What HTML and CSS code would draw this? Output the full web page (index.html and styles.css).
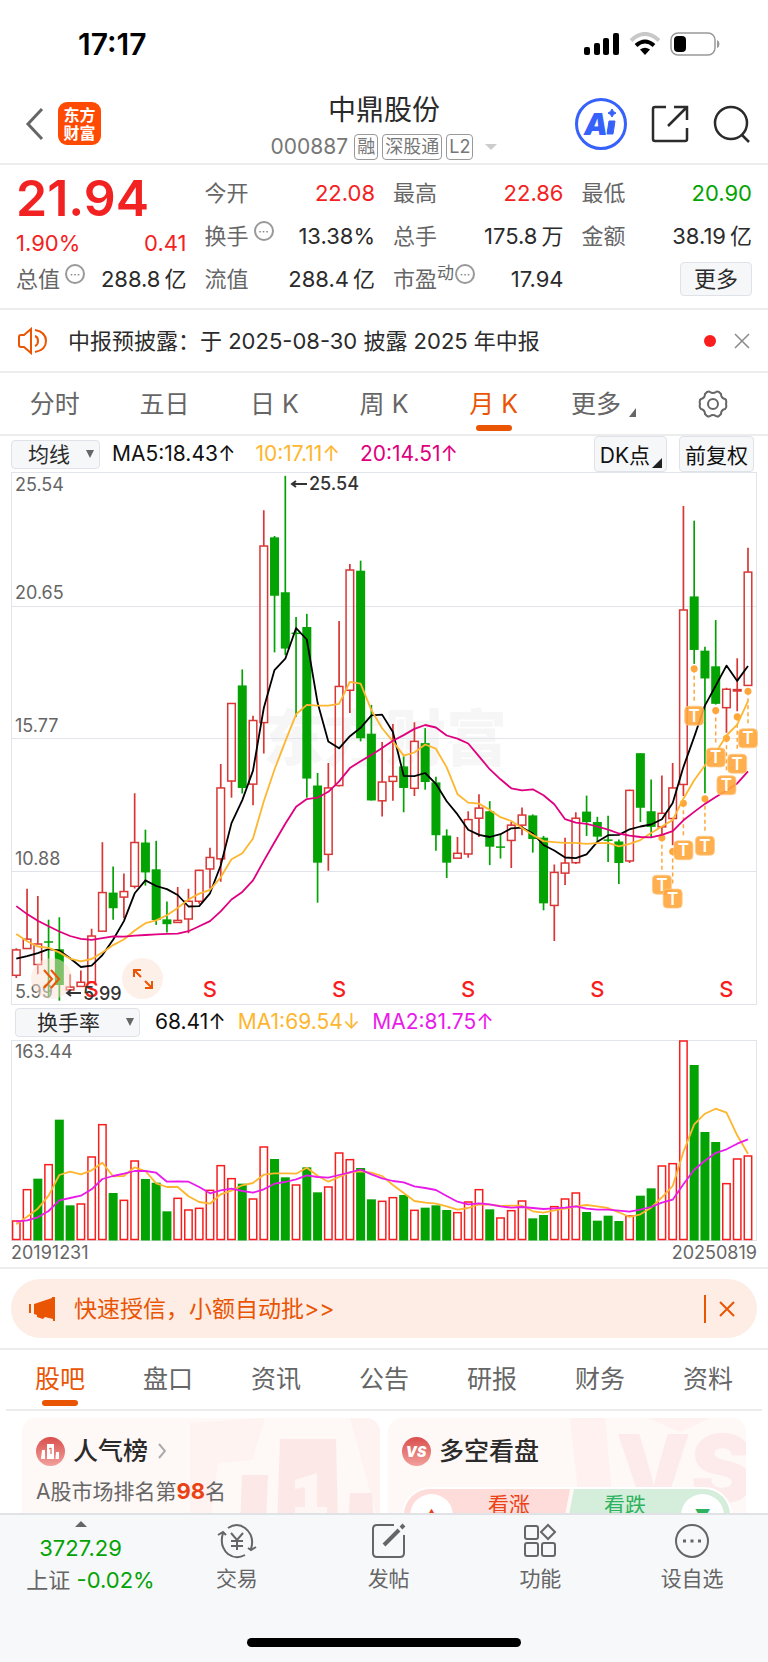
FILE: index.html
```html
<!DOCTYPE html>
<html lang="zh-CN">
<head>
    <meta charset="UTF-8">
    <meta name="viewport" content="width=device-width, initial-scale=1.0">
    <title>中鼎股份 000887</title>
    <link rel="stylesheet" href="styles.css">
</head>
<body>
    <div class="status-bar">
        <span class="clock">17:17</span>
        <div class="status-icons">
            <svg width="36" height="24" viewBox="0 0 36 24">
                <rect x="0" y="15" width="6" height="8" rx="2"/>
                <rect x="10" y="11" width="6" height="12" rx="2"/>
                <rect x="19" y="6" width="6" height="17" rx="2"/>
                <rect x="29" y="1" width="6" height="22" rx="2"/>
            </svg>
            <svg width="30" height="24" viewBox="0 0 30 24">
                <path d="M1 8.5 Q15 -4.5 29 8.5" fill="none" stroke="#c8c8c8" stroke-width="4"/>
                <path d="M6 13.5 Q15 5.5 24 13.5" fill="none" stroke="#000" stroke-width="4"/>
                <path d="M10 17.5 Q15 14 20 17.5 L15 23 Z"/>
            </svg>
            <svg width="50" height="24" viewBox="0 0 50 24">
                <rect x="1" y="1" width="44" height="22" rx="7" fill="none" stroke="#999" stroke-width="1.5"/>
                <rect x="4" y="4" width="12" height="16" rx="4"/>
                <path d="M47 8 Q49.5 9 49.5 12 Q49.5 15 47 16 Z" fill="#999"/>
            </svg>
        </div>
    </div>

    <header class="header">
        <div class="header-left">
            <button class="icon-btn" type="button" aria-label="返回">
                <svg width="20" height="34" viewBox="0 0 20 34" fill="none" stroke="#666" stroke-width="3"><path d="M17 2 L3 17 L17 32"/></svg>
            </button>
            <a class="logo" href="#"><span>东方</span><span>财富</span></a>
        </div>
        <div class="header-title">
            <h1>中鼎股份</h1>
            <div class="code">
                <span class="code-number">000887</span>
                <span class="tag">融</span>
                <span class="tag">深股通</span>
                <span class="tag">L2</span>
                <i class="tri-down"></i>
            </div>
        </div>
        <div class="header-right">
            <button class="icon-btn" type="button" aria-label="AI">
                <svg width="52" height="52" viewBox="0 0 52 52">
                    <circle cx="26" cy="26" r="24.5" fill="none" stroke="#3662fb" stroke-width="3"/>
                    <text class="ai-text" x="9" y="37">A</text>
                    <path d="M34 23 h6 l-2 13 h-6 Z M37 11 Q38 14 41 15 Q38 16 37 19 Q36 16 33 15 Q36 14 37 11 Z" fill="#3662fb" stroke="#3662fb"/>
                </svg>
            </button>
            <button class="icon-btn" type="button" aria-label="分享">
                <svg width="38" height="38" viewBox="0 0 38 38" fill="none" stroke="#2b2b2b" stroke-width="2.5"><path d="M15 2 H4 Q2 2 2 4 V34 Q2 36 4 36 H34 Q36 36 36 34 V23 M23 2 H36 V15 M36 2 L17 21"/></svg>
            </button>
            <button class="icon-btn" type="button" aria-label="搜索">
                <svg width="38" height="38" viewBox="0 0 38 38" fill="none" stroke="#2b2b2b" stroke-width="2.5"><circle cx="18" cy="18" r="16"/><path d="M29 30 L36 37"/></svg>
            </button>
        </div>
    </header>

    <section class="quote">
        <div class="quote-price">
            <strong class="price">21.94</strong>
            <div class="pair red"><span>1.90%</span><span>0.41</span></div>
        </div>
        <div class="pair"><span class="name">今开</span><span class="red">22.08</span></div>
        <div class="pair"><span class="name">最高</span><span class="red">22.86</span></div>
        <div class="pair"><span class="name">最低</span><span class="green">20.90</span></div>
        <div class="pair"><span class="name">换手<sup class="dots">···</sup></span><span>13.38%</span></div>
        <div class="pair"><span class="name">总手</span><span>175.8<span class="unit">万</span></span></div>
        <div class="pair"><span class="name">金额</span><span>38.19<span class="unit">亿</span></span></div>
        <div class="pair"><span class="name">总值<sup class="dots">···</sup></span><span>288.8<span class="unit">亿</span></span></div>
        <div class="pair"><span class="name">流值</span><span>288.4<span class="unit">亿</span></span></div>
        <div class="pair"><span class="name">市盈<sup class="dyn">动</sup><sup class="dots">···</sup></span><span>17.94</span></div>
        <div class="pair pair-end"><button class="more-btn" type="button">更多</button></div>
    </section>

    <section class="notice">
        <svg width="32" height="28" viewBox="0 0 32 28" fill="none" stroke="#ea5504" stroke-width="2"><path d="M14 2 L7 8 H4 Q2 8 2 10 V18 Q2 20 4 20 H7 L14 26 Z M18 9 Q21 10 21 14 Q21 18 18 19 M18 3 Q29 5 29 14 Q29 23 18 25"/></svg>
        <a class="notice-text" href="#">中报预披露：于 2025-08-30 披露 2025 年中报</a>
        <i class="red-dot"></i>
        <button class="icon-btn" type="button" aria-label="关闭公告">
            <svg width="16" height="16" viewBox="0 0 16 16" stroke="#8a8a8a" stroke-width="1.5"><path d="M1 1 L15 15 M15 1 L1 15"/></svg>
        </button>
    </section>

    <nav class="tabs period-tabs">
        <a href="#">分时</a>
        <a href="#">五日</a>
        <a href="#">日 K</a>
        <a href="#">周 K</a>
        <a class="active" href="#">月 K</a>
        <a class="tab-more" href="#">更多<i class="corner"></i></a>
        <a href="#" aria-label="设置">
            <svg width="30" height="28" viewBox="0 0 30 28" fill="none" stroke="#666" stroke-width="2"><path d="M9 2 Q11 1 12 2 Q15 4 18 2 Q19 1 21 2 L23 4 Q23 8 27 9 Q29 10 28 14 Q29 18 27 19 Q23 20 23 24 L21 26 Q19 27 18 26 Q15 24 12 26 Q11 27 9 26 L7 24 Q7 20 3 19 Q1 18 2 14 Q1 10 3 9 Q7 8 7 4 Z"/><circle cx="15" cy="14" r="5"/></svg>
        </a>
    </nav>

    <section class="chart-section">
        <div class="indicator-bar main-bar">
            <select class="picker" aria-label="主图指标"><option>均线</option></select>
            <span>MA5:18.43↑</span>
            <span class="amber">10:17.11↑</span>
            <span class="magenta">20:14.51↑</span>
            <button class="chart-btn dk-btn" type="button">DK点<i class="corner"></i></button>
            <button class="chart-btn" type="button">前复权</button>
        </div>
        <div class="chart-box">
            <svg id="kline" class="chart" viewBox="0 0 746 532"></svg>
            <button class="float-btn float-next" type="button" aria-label="展开">
                <svg width="20" height="20" viewBox="0 0 20 20" fill="none" stroke="#ea5504" stroke-width="2"><path d="M2 1 L10 10 L2 19 M9 1 L17 10 L9 19"/></svg>
            </button>
            <button class="float-btn float-full" type="button" aria-label="全屏">
                <svg width="22" height="22" viewBox="0 0 22 22" fill="none" stroke="#ea5504" stroke-width="2"><path d="M2 9 V2 H9 M2 2 L9 9 M20 13 V20 H13 M20 20 L13 13"/></svg>
            </button>
        </div>
        <div class="indicator-bar volume-bar">
            <select class="picker picker-wide" aria-label="副图指标"><option>换手率</option></select>
            <span>68.41↑</span>
            <span class="amber">MA1:69.54↓</span>
            <span class="violet">MA2:81.75↑</span>
        </div>
        <div class="chart-box">
            <svg id="volume" class="chart" viewBox="0 0 746 201"></svg>
        </div>
        <div class="dates"><span>20191231</span><span>20250819</span></div>
    </section>

    <section class="promo">
        <svg width="28" height="24" viewBox="0 0 28 24" fill="#ea5504"><path d="M1 7 h2 v9 h-2 Z M6 7 L24 1 V0 H27 V24 H25 V22 L17 20 L15 22 L9 20 V18 L6 17 Z"/></svg>
        <a class="promo-text" href="#">快速授信，小额自动批&gt;&gt;</a>
        <button class="icon-btn promo-close" type="button" aria-label="关闭广告">
            <svg width="16" height="16" viewBox="0 0 16 16" stroke="#ea5504" stroke-width="2"><path d="M1 1 L15 15 M15 1 L1 15"/></svg>
        </button>
    </section>

    <nav class="tabs info-tabs">
        <a class="active" href="#">股吧</a>
        <a href="#">盘口</a>
        <a href="#">资讯</a>
        <a href="#">公告</a>
        <a href="#">研报</a>
        <a href="#">财务</a>
        <a href="#">资料</a>
    </nav>

    <section class="cards">
        <article class="card">
            <svg class="card-art" width="190" height="110" viewBox="0 0 190 110">
                <path d="M0 5 L75 0 L62 42 L28 45 L20 110 H0 Z M160 0 H190 V110 Z" fill="#fef3f1"/>
                <path d="M52 57 H78 L76 110 H50 Z M90 21 H146 L148 110 H87 Z M160 75 H182 L184 110 H158 Z" fill="#fce9e7"/>
                <path d="M105 62 L127 55 V89 H137 V96 H105 V89 H115 V69 L105 71 Z" fill="#fef6f5"/>
            </svg>
            <h2>
                <svg width="29" height="29" viewBox="0 0 29 29">
                    <defs><linearGradient id="badge" x2="0" y2="1"><stop offset="0" stop-color="#d94f4d"/><stop offset="1" stop-color="#f2a09c"/></linearGradient></defs>
                    <circle cx="14.5" cy="14.5" r="14.5" fill="url(#badge)"/>
                    <path d="M6 13 H9 V22 H5 Z M11 7 H18 V22 H11 Z M20 15 H23 V22 H19.5 Z" fill="#fff"/>
                    <path d="M13 12 L15 11 V17" fill="none" stroke="#d94f4d"/>
                </svg>
                人气榜
                <svg class="arrow" width="8" height="16" viewBox="0 0 8 16" fill="none" stroke="#aaa" stroke-width="2"><path d="M1 1 L7 8 L1 15"/></svg>
            </h2>
            <p class="rank">A股市场排名第<b>98</b>名</p>
        </article>
        <article class="card">
            <svg class="card-art" width="176" height="110" viewBox="0 0 176 110">
                <path d="M0 0 H35 L45 110 H12 Z M78 0 H140 L110 14 Z" fill="#fef1ef"/>
                <text class="art-vs" x="46" y="84">VS</text>
            </svg>
            <h2>
                <svg width="29" height="29" viewBox="0 0 29 29">
                    <circle cx="14.5" cy="14.5" r="14.5" fill="url(#badge)"/>
                    <text class="badge-vs" x="14" y="20">VS</text>
                </svg>
                多空看盘
            </h2>
            <div class="vote">
                <button class="vote-up" type="button"><i class="vote-dot">▲</i><span>看涨</span></button>
                <button class="vote-down" type="button"><span>看跌</span><i class="vote-dot">▼</i></button>
            </div>
        </article>
    </section>

    <footer class="bottom-bar">
        <div class="bottom-items">
            <a class="index" href="#">
                <i class="tri-up"></i>
                <span class="green">3727.29</span>
                <span class="index-change">上证 <span class="green">-0.02%</span></span>
            </a>
            <a href="#">
                <svg width="40" height="36" viewBox="0 0 40 36" fill="none" stroke="#666" stroke-width="2"><path d="M11 5 Q20 -1 28 5 Q38 13 34 26 M31 25 L34 27 L39 24 M28 32 Q19 37 11 31 Q2 23 6 10 M1 12 L6 9 L9 12 M14 10 L20 17 L26 10 M20 17 V27 M14 18 H26 M14 23 H26"/></svg>
                <span>交易</span>
            </a>
            <a href="#">
                <svg width="36" height="36" viewBox="0 0 36 36" fill="none" stroke="#666" stroke-width="2"><path d="M23 2 H6 Q2 2 2 6 V30 Q2 34 6 34 H29 Q33 34 33 30 V12"/><path d="M13 22 L28 7 M30 5 L33 2" stroke-width="4"/></svg>
                <span>发帖</span>
            </a>
            <a href="#">
                <svg width="34" height="36" viewBox="0 0 34 36" fill="none" stroke="#666" stroke-width="2"><rect x="2" y="3" width="13" height="13" rx="2"/><rect x="2" y="20" width="13" height="13" rx="2"/><rect x="19" y="20" width="13" height="13" rx="2"/><path d="M25 2 L32 9 L25 16 L18 9 Z"/></svg>
                <span>功能</span>
            </a>
            <a href="#">
                <svg width="36" height="36" viewBox="0 0 36 36" fill="none" stroke="#666" stroke-width="2"><circle cx="18" cy="18" r="16"/><path d="M9 18 h3 M16.5 18 h3 M24 18 h3" stroke-width="3"/></svg>
                <span>设自选</span>
            </a>
        </div>
        <div class="home-indicator"></div>
    </footer>

    <script src="script.js"></script>
</body>
</html>
```
FILE: styles.css
```css
* {
    box-sizing: border-box;
}
body {
    margin: 0;
    font-family: Inter, "Noto Sans CJK SC", sans-serif;
    font-size: 22px;
    line-height: 30px;
    color: #2b2b2b;
    background: #fff;
}
a {
    color: inherit;
    text-decoration: none;
}
button, select {
    font-family: inherit;
    color: inherit;
}
svg {
    display: block;
    flex: none;
}
h1, h2, p {
    margin: 0;
}
.red {
    color: #f32222;
}
.green {
    color: #04a304;
}
.amber {
    color: #feb62f;
}
.magenta {
    color: #e0007f;
}
.violet {
    color: #e91bea;
}
.icon-btn {
    padding: 0;
    border: 0;
    background: none;
    cursor: pointer;
}

/* status bar */
.status-bar {
    display: flex;
    justify-content: space-between;
    align-items: center;
    height: 84px;
    padding: 4px 48px 0 78px;
}
.clock {
    font-size: 30px;
    font-weight: 600;
    color: #000;
}
.status-icons {
    display: flex;
    gap: 10px;
}

/* header */
.header {
    display: grid;
    grid-template-columns: 1fr auto 1fr;
    align-items: center;
    height: 81px;
    padding: 0 17px;
    border-bottom: 2px solid #ececec;
}
.header-left, .header-right {
    display: flex;
    align-items: center;
}
.header-left {
    gap: 13px;
    padding-left: 8px;
}
.header-right {
    justify-content: flex-end;
    gap: 24px;
}
.logo {
    display: flex;
    flex-direction: column;
    justify-content: center;
    width: 43px;
    height: 43px;
    border-radius: 9px;
    background: #ff4a04;
    color: #fff;
    font-size: 16px;
    line-height: 18px;
    font-weight: 700;
    text-align: center;
}
.header-title {
    padding-top: 6px;
    text-align: center;
}
.header-title h1 {
    font-size: 28px;
    line-height: 38px;
    font-weight: 400;
}
.code {
    display: flex;
    align-items: center;
    gap: 4px;
    margin-top: 3px;
    color: #777;
}
.code-number {
    font-size: 21px;
    margin-right: 2px;
}
.tag {
    padding: 0 2px;
    border: 1px solid #999;
    border-radius: 4px;
    font-size: 18px;
    line-height: 24px;
}
.tri-down {
    margin-left: 8px;
    border: 6px solid transparent;
    border-top-color: #ccc;
    border-bottom: 0;
}
.ai-text {
    font-size: 30px;
    font-weight: 900;
    font-style: italic;
    fill: #3662fb;
}

/* quote */
.quote {
    display: grid;
    grid-template-columns: repeat(4, 1fr);
    gap: 13px 18px;
    padding: 13px 16px 14px;
    border-bottom: 2px solid #ececec;
}
.quote-price {
    grid-row: span 2;
    margin-bottom: -7px;
}
.price {
    display: block;
    font-size: 50px;
    line-height: 40px;
    font-weight: 600;
    color: #f32222;
}
.quote-price .pair {
    margin-top: 10px;
}
.pair {
    display: flex;
    justify-content: space-between;
    align-items: center;
    white-space: nowrap;
}
.pair-end {
    justify-content: flex-end;
}
.unit {
    margin-left: 4px;
}
.name {
    display: flex;
    color: #666;
}
.name sup {
    line-height: 18px;
}
.dots {
    width: 20px;
    height: 20px;
    margin-left: 5px;
    border: 2px solid #999;
    border-radius: 50%;
    font-size: 12px;
    text-align: center;
    color: #777;
}
.dyn {
    font-size: 17px;
}
.dyn + .dots {
    margin-left: 1px;
}
.more-btn {
    height: 34px;
    margin: -2px 0;
    padding: 0 13px;
    border: 1px solid #dfe2e8;
    border-radius: 4px;
    background: #f6f7f9;
    font-size: 22px;
    line-height: 30px;
}

/* notice */
.notice {
    display: flex;
    align-items: center;
    height: 63px;
    padding: 0 18px 0 17px;
    border-bottom: 2px solid #ececec;
}
.notice-text {
    flex: 1;
    margin-left: 19px;
}
.red-dot {
    width: 12px;
    height: 12px;
    margin-right: 18px;
    border-radius: 50%;
    background: #f91d1d;
}

/* tabs */
.tabs {
    display: flex;
    height: 63px;
    border-bottom: 2px solid #ececec;
}
.tabs a {
    position: relative;
    display: flex;
    flex: 1;
    justify-content: center;
    align-items: center;
    font-size: 25px;
    color: #666;
}
.tabs .active {
    color: #ea5504;
}
.tabs .active::after {
    content: "";
    position: absolute;
    bottom: 3px;
    width: 36px;
    height: 6px;
    border-radius: 3px;
    background: #ea5504;
}
.corner {
    border-left: 7px solid transparent;
    border-bottom: 9px solid #666;
}
.tab-more .corner {
    align-self: flex-end;
    margin: 0 0 17px 8px;
}

/* charts */
.chart-section {
    padding: 0 11px 5px;
    border-bottom: 2px solid #ececec;
}
.indicator-bar {
    display: flex;
    align-items: center;
    gap: 12px;
    height: 36px;
    font-size: 21px;
    color: #111;
    white-space: nowrap;
}
.main-bar {
    padding-right: 3px;
}
.main-bar span {
    margin-right: 8px;
}
.picker {
    appearance: none;
    width: 89px;
    height: 29px;
    padding: 0 0 0 16px;
    border: 1px solid #dfe2e8;
    border-radius: 4px;
    background: url("data:image/svg+xml,%3Csvg xmlns='http://www.w3.org/2000/svg' width='8' height='8'%3E%3Cpath d='M0 0h8l-4 8z' fill='%23666'/%3E%3C/svg%3E") no-repeat right 5px center #f6f7f9;
    font-size: 21px;
    line-height: 27px;
    color: #2b2b2b;
}
.picker-wide {
    width: 125px;
    padding-left: 21px;
}
.volume-bar {
    padding-left: 4px;
}
.volume-bar .picker {
    margin-right: 3px;
}
.chart-btn {
    position: relative;
    height: 36px;
    padding: 0 5px;
    border: 1px solid #dfe2e8;
    border-radius: 4px;
    background: #f6f7f9;
    font-size: 21px;
}
.dk-btn {
    margin-left: auto;
    padding-right: 16px;
}
.dk-btn .corner {
    position: absolute;
    right: 4px;
    bottom: 3px;
    border-left-width: 10px;
    border-bottom: 10px solid #222;
}
.chart-box {
    position: relative;
}
.chart {
    width: 100%;
    overflow: visible;
}
.axis {
    font-size: 18px;
    fill: #666;
}
.peak {
    font-size: 18px;
    font-weight: 500;
    fill: #333;
}
.signal {
    font-size: 22px;
    font-weight: 500;
    fill: #f91d1d;
    text-anchor: middle;
}
.t-mark {
    font-size: 17px;
    font-weight: 600;
    fill: #fff;
    text-anchor: middle;
}
.watermark {
    font-size: 61px;
    font-weight: 900;
    fill: #f6f6f7;
}
.float-btn {
    position: absolute;
    bottom: 5px;
    display: flex;
    justify-content: center;
    align-items: center;
    width: 41px;
    height: 41px;
    padding: 0;
    border: 0;
    border-radius: 50%;
    background: rgba(252, 226, 212, 0.5);
}
.float-next {
    left: 20px;
}
.float-full {
    left: 111px;
}
.dates {
    display: flex;
    justify-content: space-between;
    padding-top: 3px;
    font-size: 18px;
    line-height: 18px;
    color: #666;
}

/* promo */
.promo {
    display: flex;
    align-items: center;
    height: 59px;
    margin: 10px 11px;
    padding: 0 22px 0 17px;
    border-radius: 30px;
    background: #fdede5;
    color: #ea5504;
}
.promo-text {
    flex: 1;
    margin-left: 18px;
    font-size: 23px;
}
.promo-close {
    padding: 6px 0 6px 13px;
    border-left: 2px solid #ea5504;
}

.info-tabs {
    margin: 0 6px;
}
.info-tabs::before {
    content: "";
    position: absolute;
    left: 0;
    right: 0;
    border-top: 2px solid #ececec;
}

/* cards */
.cards {
    display: grid;
    grid-template-columns: 1fr 1fr;
    gap: 8px;
    padding: 7px 22px 0;
}
.card {
    position: relative;
    height: 150px;
    overflow: hidden;
    padding: 17px 14px;
    border-radius: 14px;
    background: #fef8f6;
}
.card-art {
    position: absolute;
    top: 0;
    right: 0;
}
.card h2 {
    position: relative;
    display: flex;
    align-items: center;
    gap: 8px;
    font-size: 25px;
    line-height: 32px;
    font-weight: 500;
}
.arrow {
    margin-left: 2px;
}
.rank {
    position: relative;
    margin-top: 9px;
    font-size: 21px;
    line-height: 30px;
    color: #666;
}
.rank b {
    font-size: 22px;
    color: #ea4214;
}
.badge-vs {
    font-size: 14px;
    font-weight: 900;
    font-style: italic;
    fill: #fff;
    text-anchor: middle;
}
.art-vs {
    font-size: 94px;
    font-weight: 900;
    fill: #fcebea;
}
.vote {
    position: relative;
    display: flex;
    gap: 4px;
    height: 56px;
    margin-top: 20px;
    overflow: hidden;
    border: 2px solid #fff;
    border-radius: 28px;
}
.vote button {
    display: flex;
    flex: 1;
    justify-content: space-between;
    padding: 5px 40px 0 6px;
    border: 0;
    font-size: 21px;
    line-height: 22px;
}
.vote .vote-up {
    background: #fddcda;
    color: #ea4214;
    clip-path: polygon(0 0, 100% 0, calc(100% - 10px) 100%, 0 100%);
}
.vote .vote-down {
    margin-left: -10px;
    padding: 5px 6px 0 40px;
    background: #d4eedb;
    color: #2fb25e;
    clip-path: polygon(10px 0, 100% 0, 100% 100%, 0 100%);
}
.vote-dot {
    width: 43px;
    height: 43px;
    border-radius: 50%;
    background: #fff;
    font-size: 16px;
    font-style: normal;
    line-height: 43px;
}

/* bottom bar */
.bottom-bar {
    position: fixed;
    left: 0;
    right: 0;
    bottom: 0;
    height: 149px;
    border-top: 2px solid #e0e2e6;
    background: #f7f8fa;
}
.bottom-items {
    display: grid;
    grid-template-columns: 161px repeat(4, 1fr);
    height: 122px;
}
.bottom-items a {
    display: flex;
    flex-direction: column;
    align-items: center;
    padding-top: 8px;
    font-size: 21px;
    color: #666;
}
.bottom-items a svg {
    margin-bottom: 5px;
}
.bottom-items .index {
    padding-top: 6px;
    font-size: 22px;
}
.tri-up {
    margin-bottom: 6px;
    border: 6px solid transparent;
    border-bottom-color: #666;
    border-top: 0;
}
.index-change {
    padding: 2px 0 0 20px;
}
.home-indicator {
    width: 274px;
    height: 9px;
    margin: 1px auto 0;
    border-radius: 5px;
    background: #000;
}
```
FILE: script.js
```js
const RED = '#d93636';
const GREEN = '#04a304';
const STEP = 10.76;
const FIRST = 5.3;

// [up?, high, body top, body bottom, low] in plot units, 0 at the highest line
const candles = [
    [1,1388,1393,1466,1474],[1,1217,1362,1389,1389],[1,1238,1376,1435,1463],[0,1306,1368,1371,1528],
    [0,1299,1391,1494,1539],[1,1463,1500,1508,1508],[1,1452,1486,1498,1498],[1,1332,1353,1486,1486],
    [1,1083,1228,1339,1339],[0,1153,1228,1273,1306],[1,1173,1225,1241,1302],[1,942,1084,1210,1216],
    [0,1047,1084,1170,1208],[0,1079,1161,1307,1321],[0,1254,1305,1319,1343],[1,1212,1308,1314,1314],
    [1,1217,1253,1304,1345],[1,1162,1164,1253,1260],[1,1099,1127,1160,1216],[1,858,927,1131,1197],
    [1,684,684,907,955],[0,586,632,927,943],[1,719,733,916,977],[1,128,231,739,828],
    [0,202,206,374,537],[0,29,364,526,545],[0,435,480,483,722],[0,426,464,900,955],
    [0,884,920,1142,1257],[1,855,927,1118,1165],[1,447,635,920,923],[1,283,300,646,711],
    [0,273,302,784,793],[0,688,771,963,963],[1,795,910,964,1009],[1,743,894,908,964],
    [0,836,865,927,997],[1,738,793,928,950],[0,755,798,910,932],[0,895,911,1063,1108],
    [0,1046,1064,1142,1186],[1,1068,1115,1129,1131],[1,994,1018,1117,1128],[1,945,985,1014,1068],
    [0,965,994,1096,1149],[0,1060,1095,1098,1130],[1,1025,1034,1078,1157],[1,983,1005,1034,1063],
    [0,1003,1006,1074,1113],[0,1065,1070,1259,1279],[1,1147,1170,1265,1367],[1,1070,1143,1172,1206],
    [1,997,1014,1142,1146],[0,949,995,1025,1065],[0,1010,1025,1067,1080],[0,1007,1075,1078,1140],
    [0,1075,1081,1143,1203],[1,932,934,1137,1143],[0,827,827,984,1025],[0,903,994,1039,1070],
    [1,891,1000,1039,1060],[1,855,927,1015,1092],[1,116,415,917,950],[0,158,376,530,570],
    [0,521,532,612,942],[0,444,577,685,687],[1,639,643,696,768],[1,554,644,648,706],[1,236,306,632,632]
];
const ma5 = [1418,1411,1402,1391,1395,1417,1442,1438,1408,1364,1310,1230,1193,1209,1218,1235,1268,1267,1230,1150,1028,962,877,697,588,555,467,500,682,793,813,778,754,718,716,766,892,893,884,915,965,1003,1047,1062,1068,1060,1043,1041,1058,1091,1107,1127,1129,1118,1082,1063,1062,1046,1038,1032,1017,970,867,780,690,633,575,619,576];
const ma10 = [1347,1368,1383,1387,1400,1418,1426,1419,1400,1379,1363,1337,1316,1308,1293,1272,1248,1231,1220,1184,1132,1115,1072,965,874,793,715,688,690,690,685,622,627,703,755,793,834,825,802,814,868,945,969,972,990,1011,1022,1042,1062,1080,1083,1085,1085,1088,1086,1085,1095,1088,1077,1057,1038,1019,958,905,862,826,776,745,677];
const ma20 = [1267,1290,1309,1325,1340,1353,1361,1364,1359,1354,1355,1352,1350,1348,1347,1346,1339,1325,1310,1282,1248,1226,1193,1137,1083,1030,981,959,955,938,908,870,850,832,812,791,775,757,746,753,776,785,799,836,873,902,928,934,931,948,974,1017,1027,1030,1038,1047,1058,1064,1068,1069,1062,1051,1020,996,973,953,934,914,879];
// [candle index, dot position]
const marks = [[60,1070],[61,1110],[62,971],[63,584],[64,958],[65,704],[66,784],[67,722],[68,649]];

// bar tops, negative = green bar
const bars = [661,567,-534,492,-357,-614,610,469,372,-577,599,481,-535,-546,-632,593,628,623,569,495,534,-549,595,439,-475,-530,553,-500,-575,559,457,477,-502,-596,602,591,-583,629,-621,-614,-628,636,604,567,-626,652,630,601,-653,-643,618,595,577,-634,-660,-645,-661,646,-585,-563,496,489,121,-193,-394,-424,549,475,466];
const vma1 = [671,648,624,585,523,513,521,509,486,527,526,500,511,548,559,559,587,604,609,581,570,554,547,522,518,518,519,501,525,543,529,515,512,516,526,553,577,601,606,609,617,627,622,611,612,616,615,615,632,636,629,624,617,613,617,622,635,649,641,621,590,556,454,371,339,324,336,404,459];
const vma2 = [663,659,650,631,599,592,585,566,535,526,519,511,511,516,543,542,543,559,578,569,564,571,576,566,549,544,536,524,529,531,523,515,507,521,533,541,545,557,562,568,586,603,611,608,611,617,621,619,622,625,623,621,617,624,627,627,630,633,627,619,606,597,551,507,480,457,446,429,416];

const cx = i => FIRST + i * STEP;
const priceY = v => (v - 18) / 2.877;
const volumeY = v => (v - 118) / 3;

function line(values, y, color) {
    const points = values.map((v, i) => `${cx(i).toFixed(1)},${y(v).toFixed(1)}`).join(' ');
    return `<polyline points="${points}" fill="none" stroke="${color}" stroke-width="1.8" stroke-linejoin="round"/>`;
}

function drawKline() {
    let out = '<text class="watermark" x="252" y="289">东方财富</text>';
    out += '<rect x="0.5" y="0.5" width="745" height="532" fill="none" stroke="#e2e4ec"/>';
    [134.5, 266.5, 399.5].forEach(y => {
        out += `<path d="M0 ${y} H746" stroke="#e2e4ec"/>`;
    });
    [['25.54', 19], ['20.65', 127], ['15.77', 260], ['10.88', 393], ['5.99', 526]].forEach(([t, y]) => {
        out += `<text class="axis" x="4" y="${y}">${t}</text>`;
    });
    candles.forEach(([up, high, top, bottom, low], i) => {
        const x = cx(i);
        const [h, t, b, l] = [high, top, bottom, low].map(priceY);
        if (up) {
            const height = Math.max(b - t, 1);
            out += `<path d="M${x} ${h} V${t} M${x} ${b} V${l}" stroke="${RED}" stroke-width="1.7"/>`;
            out += `<rect x="${x - 3.8}" y="${t}" width="7.6" height="${height}" fill="none" stroke="${RED}" stroke-width="1.5"/>`;
        } else {
            out += `<path d="M${x} ${h} V${l}" stroke="${GREEN}" stroke-width="1.7"/>`;
            out += `<rect x="${x - 4.5}" y="${t}" width="9" height="${Math.max(b - t, 1.5)}" fill="${GREEN}"/>`;
        }
    });
    marks.forEach(([i, v]) => {
        const x = cx(i);
        const y = priceY(v);
        out += `<path d="M${x} ${y} V${y + 33}" stroke="#ffa63a" stroke-width="1.5" stroke-dasharray="4 3"/>`;
        out += `<circle cx="${x}" cy="${y}" r="3.5" fill="#ffa63a"/>`;
    });
    out += line(ma5, priceY, '#000') + line(ma10, priceY, '#feb62f') + line(ma20, priceY, '#e0007f');
    marks.forEach(([i, v]) => {
        const x = cx(i);
        const y = priceY(v) + 47;
        out += `<rect x="${x - 9.5}" y="${y - 9.5}" width="19" height="19" rx="4" fill="#ffa63a" fill-opacity="0.9" stroke="#ffc98a" stroke-width="0.8"/>`;
        out += `<text class="t-mark" x="${x}" y="${y + 6}">T</text>`;
    });
    [7, 18, 30, 42, 54, 66].forEach(i => {
        out += `<text class="signal" x="${cx(i)}" y="525">S</text>`;
    });
    out += '<path d="M281 12 H296 M285 9 L281 12 L285 15" fill="none" stroke="#333" stroke-width="2"/><text class="peak" x="298" y="18">25.54</text>';
    out += '<path d="M56 521 H70 M60 518 L56 521 L60 524" fill="none" stroke="#333" stroke-width="2"/><text class="peak" x="72" y="528">5.99</text>';
    document.getElementById('kline').innerHTML = out;
}

function drawVolume() {
    let out = '<rect x="0.5" y="0.5" width="745" height="200" fill="none" stroke="#e2e4ec"/>';
    out += '<text class="axis" x="4" y="18">163.44</text>';
    bars.forEach((v, i) => {
        const x = cx(i);
        const y = volumeY(Math.abs(v));
        if (v > 0) {
            out += `<rect x="${x - 3.7}" y="${y}" width="7.4" height="${199.5 - y}" fill="none" stroke="#f91d1d" stroke-width="1.5"/>`;
        } else {
            out += `<rect x="${x - 4.5}" y="${y}" width="9" height="${200.5 - y}" fill="${GREEN}"/>`;
        }
    });
    out += line(vma1, volumeY, '#feb62f') + line(vma2, volumeY, '#e91bea');
    document.getElementById('volume').innerHTML = out;
}

drawKline();
drawVolume();
```
